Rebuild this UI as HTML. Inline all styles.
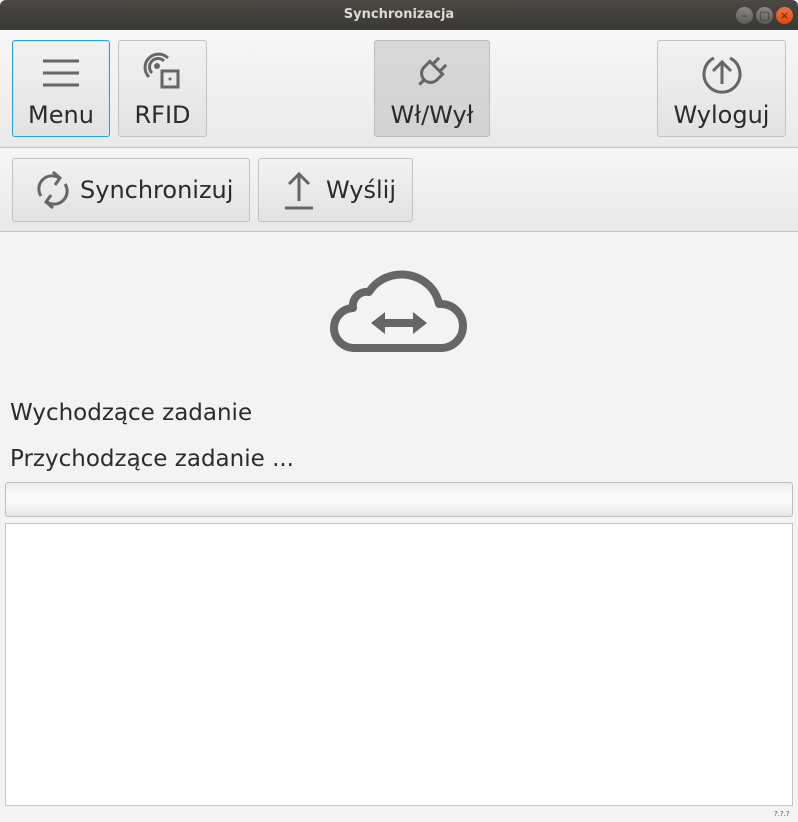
<!DOCTYPE html>
<html><head><meta charset="utf-8"><style>
*{box-sizing:border-box;margin:0;padding:0}
body{width:798px;height:822px;overflow:hidden;background:#f3f3f3;font-family:"DejaVu Sans","Liberation Sans",sans-serif;color:#2b2b2b;position:relative}
.title{position:absolute;left:0;top:0;width:798px;height:30px;background:linear-gradient(#4a4843,#3a3935);border-radius:6px 6px 0 0;color:#dfdbd2;font-size:13px;font-weight:bold;text-align:center;line-height:30px}
.wb{position:absolute;top:7px;width:17px;height:17px;border-radius:50%;background:linear-gradient(#8a8884,#5c5b57);color:#3a3935;font-size:11px;line-height:17px;text-align:center}
.tb1{position:absolute;left:0;top:30px;width:798px;height:118px;background:linear-gradient(#f7f7f7,#e9e9e9);border-bottom:1px solid #c4c4c4}
.tb2{position:absolute;left:0;top:148px;width:798px;height:84px;background:linear-gradient(#f6f6f6,#e8e8e8);border-bottom:1px solid #c4c4c4}
.btn{position:absolute;border:1px solid #c2c2c2;border-radius:3px;background:linear-gradient(#f2f2f2,#e2e2e2);font-size:24px;text-align:center}
.btn svg{display:block;margin:0 auto}
.btn .t{position:absolute;left:0;right:0;top:60px}
.lab{position:absolute;left:10px;font-size:23px}
</style></head><body>
<div class="title">Synchronizacja</div>
<div class="wb" style="left:736px">–</div>
<div class="wb" style="left:756px">□</div>
<div class="wb" style="left:776px;background:linear-gradient(#f0733f,#dd4814);color:#5a1e08">×</div>

<div class="tb1"></div>
<div class="btn" style="left:12px;top:40px;width:98px;height:97px;border-color:#2aa0d8;box-shadow:inset 0 0 0 1px #cfe8f4">
<svg width="40" height="40" viewBox="0 0 40 40" style="margin-top:12px"><path d="M2 8h36M2 20h36M2 32h36" stroke="#666" stroke-width="3"/></svg>
<div class="t">Menu</div></div>
<div class="btn" style="left:118px;top:40px;width:89px;height:97px">
<svg width="40" height="40" viewBox="0 0 40 40" style="margin-top:11px"><circle cx="14" cy="14" r="3" fill="#666"/><path d="M21 9A8 8 0 1 0 9 21M25 6A13 13 0 1 0 6 25" fill="none" stroke="#666" stroke-width="3"/><rect x="19" y="19" width="16" height="16" fill="none" stroke="#666" stroke-width="3"/><circle cx="27" cy="27" r="1.5" fill="#666"/></svg>
<div class="t">RFID</div></div>
<div class="btn" style="left:374px;top:40px;width:116px;height:97px;background:linear-gradient(#d8d8d8,#d2d2d2);border-color:#bdbdbd">
<svg width="40" height="40" viewBox="0 0 40 40" style="margin-top:11px"><g transform="rotate(45 20 20)" fill="none" stroke="#666" stroke-width="3"><path d="M11 14h18v8a9 9 0 0 1-18 0z"/><path d="M15 14V5M25 14V5M20 31v7"/></g></svg>
<div class="t">Wł/Wył</div></div>
<div class="btn" style="left:657px;top:40px;width:129px;height:97px">
<svg width="44" height="44" viewBox="0 0 44 44" style="margin-top:9px"><path d="M14 8A18 18 0 1 0 30 8" fill="none" stroke="#666" stroke-width="3"/><path d="M22 34V12M13 21l9-9 9 9" fill="none" stroke="#666" stroke-width="3"/></svg>
<div class="t">Wyloguj</div></div>

<div class="tb2"></div>
<div class="btn" style="left:12px;top:158px;width:238px;height:64px;line-height:62px;text-align:left;padding-left:67px">
<svg width="36" height="44" viewBox="0 0 36 44" style="position:absolute;left:22px;top:9px"><path d="M6 28A13 13 0 0 1 24 10M30 16A13 13 0 0 1 12 34" fill="none" stroke="#666" stroke-width="3"/><path d="M18 4l7 6-5 7M18 40l-7-6 5-7" fill="none" stroke="#666" stroke-width="3"/></svg>Synchronizuj</div>
<div class="btn" style="left:258px;top:158px;width:155px;height:64px;line-height:62px;text-align:left;padding-left:67px">
<svg width="36" height="44" viewBox="0 0 36 44" style="position:absolute;left:22px;top:9px"><path d="M18 33V6M8 16l10-10 10 10M4 40h28" fill="none" stroke="#666" stroke-width="3"/></svg>Wyślij</div>

<svg width="140" height="90" viewBox="0 0 140 90" style="position:absolute;left:329px;top:266px"><path d="M26 82H112a22 22 0 0 0 0-44 H110A38 36 0 0 0 40 26 A14 14 0 0 0 24 42 A20 20 0 0 0 26 82z" fill="none" stroke="#666" stroke-width="8" stroke-linejoin="round"/><path d="M42 57l14-11v7h28v-7l14 11-14 11v-7H56v7z" fill="#666"/></svg>

<div class="lab" style="top:400px">Wychodzące zadanie</div>
<div class="lab" style="top:446px">Przychodzące zadanie  ...</div>
<div style="position:absolute;left:5px;top:482px;width:788px;height:35px;border:1px solid #bdbdbd;border-radius:3px;background:linear-gradient(#ececec,#fafafa 35%,#f6f6f6 70%,#e6e6e6)"></div>
<div style="position:absolute;left:5px;top:523px;width:788px;height:283px;border:1px solid #c6c6c6;background:#fff"></div>
<div style="position:absolute;left:774px;top:810px;font-size:7px;color:#555">?.?.?</div>
</body></html>
